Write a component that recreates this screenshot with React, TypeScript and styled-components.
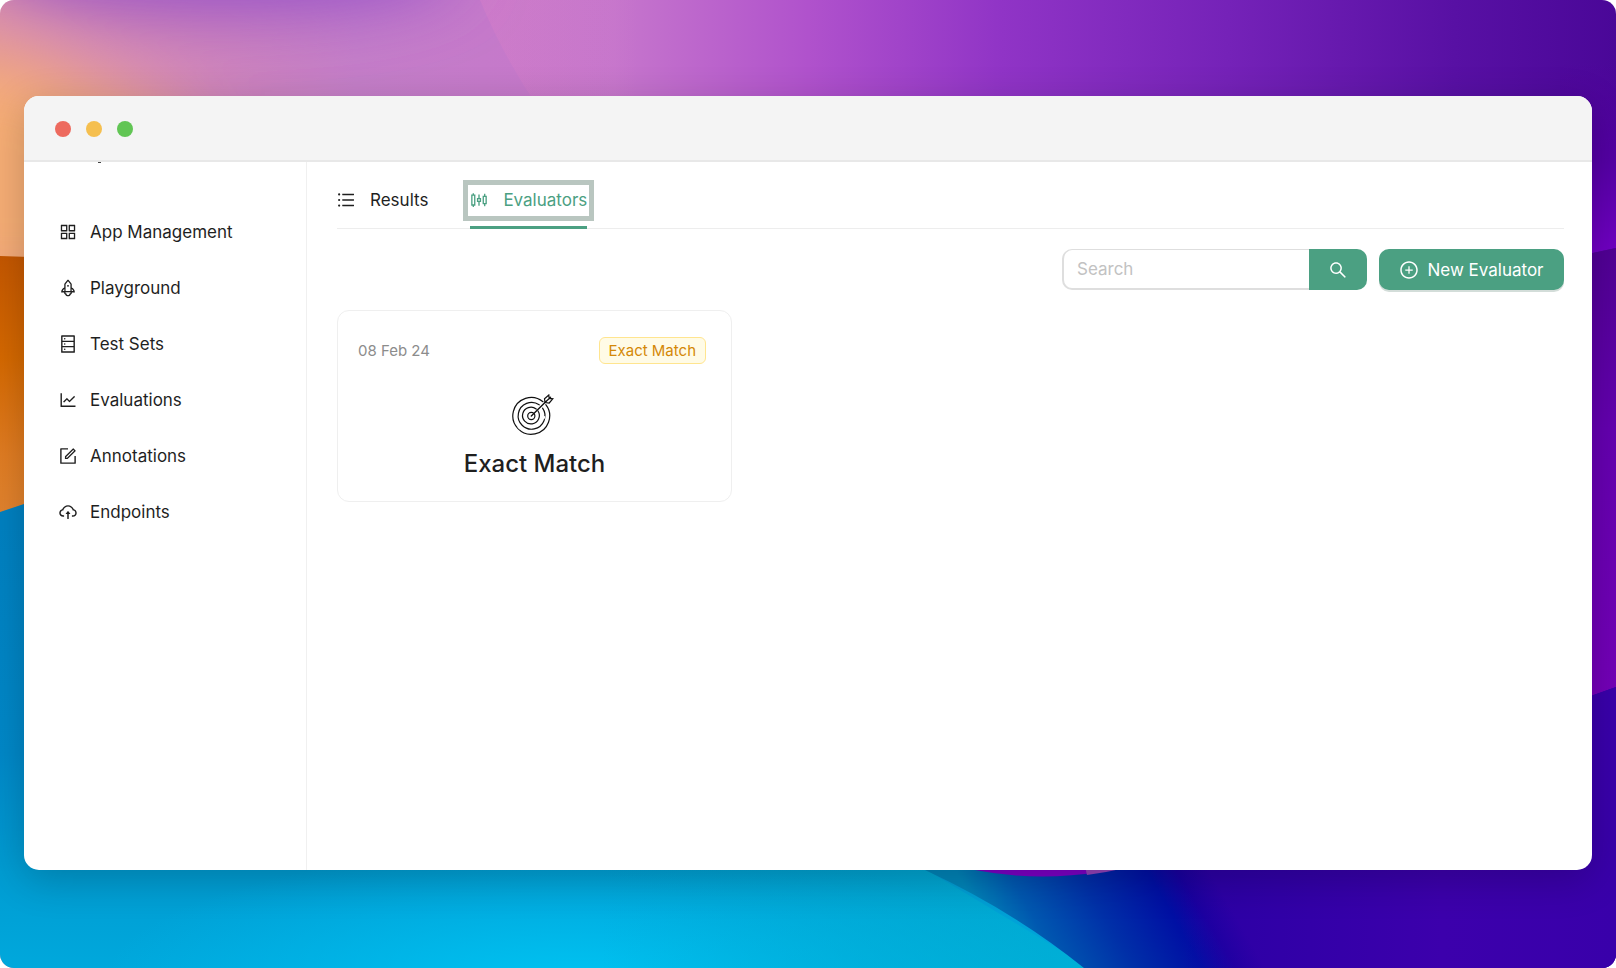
import React from "react";
import styled, { createGlobalStyle } from "styled-components";
import {
  AiOutlineAppstore,
  AiOutlineCloudUpload,
  AiOutlineDatabase,
  AiOutlineForm,
  AiOutlineLineChart,
  AiOutlinePlusCircle,
  AiOutlineRocket,
  AiOutlineSearch,
  AiOutlineSliders,
  AiOutlineUnorderedList,
} from "react-icons/ai";

const GREEN = "#4ba082";
const INK = "#1f1f1f";

const GlobalStyle = createGlobalStyle`
  *, *::before, *::after { box-sizing: border-box; }
  body {
    margin: 0;
    background: #fff;
    color: ${INK};
    font-family: Inter, "Liberation Sans", sans-serif;
    font-size: 17px;
    line-height: 24px;
  }
  button, input { font: inherit; color: inherit; }
`;

const Desktop = styled.div`
  position: relative;
  display: flex;
  min-height: 100vh;
  padding: 96px 24px 98px;
  border-radius: 14px;
  overflow: hidden;
`;

const WallpaperSvg = styled.svg`
  position: absolute;
  inset: 0;
  width: 100%;
  height: 100%;
`;

const Window = styled.div`
  position: relative;
  flex: 1;
  display: flex;
  flex-direction: column;
  min-width: 0;
  border-radius: 15px;
  background: #fff;
  overflow: hidden;
  box-shadow: 0 10px 40px rgba(0, 0, 0, 0.2);
`;

const TitleBar = styled.header`
  display: flex;
  align-items: center;
  gap: 15px;
  height: 66px;
  padding: 2px 31px 0;
  background: #f4f4f4;
  border-bottom: 2px solid #e8e8e8;
`;

const Light = styled.span<{ $color: string }>`
  width: 16px;
  height: 16px;
  border-radius: 50%;
  background: ${(p) => p.$color};
`;

const Body = styled.div`
  flex: 1;
  display: flex;
`;

const Sidebar = styled.nav`
  position: relative;
  flex: 0 0 283px;
  padding: 50px 12px 0 34px;
  border-right: 1px solid #f0f0f0;
`;

const LogoTail = styled.span`
  position: absolute;
  top: 0;
  left: 74px;
  width: 3px;
  height: 1px;
  background: #444;
`;

const Menu = styled.ul`
  display: flex;
  flex-direction: column;
  gap: 16px;
  margin: 0;
  padding: 0;
  list-style: none;
`;

const MenuLink = styled.a`
  display: flex;
  align-items: center;
  gap: 12px;
  height: 40px;
  color: inherit;
  text-decoration: none;

  svg { width: 20px; height: 20px; }
`;

const Main = styled.main`
  flex: 1;
  min-width: 0;
  padding: 12px 28px 28px 30px;
`;

const TabBar = styled.div`
  display: flex;
  gap: 42px;
  box-shadow: inset 0 -1px #ededed;
`;

const Tab = styled.button<{ $active?: boolean }>`
  height: 55px;
  padding: 0;
  border: 0;
  border-bottom: 3px solid ${(p) => (p.$active ? GREEN : "transparent")};
  background: none;
  color: ${(p) => (p.$active ? GREEN : INK)};
`;

const TabLabel = styled.span<{ $focused?: boolean }>`
  display: flex;
  align-items: center;
  gap: 15px;
  height: 27px;
  outline: ${(p) => (p.$focused ? "5px solid #b9c6c0" : "none")};
  outline-offset: 2px;

  svg { width: 20px; height: 20px; margin: 0 -1px; }
`;

const Toolbar = styled.div`
  display: flex;
  justify-content: flex-end;
  gap: 12px;
  margin: 20px 0;
`;

const SearchForm = styled.form`
  display: flex;
  width: 305px;
  height: 41px;
`;

const SearchInput = styled.input`
  flex: 1;
  min-width: 0;
  padding: 0 13px;
  border: 2px solid #dedede;
  border-width: 1px 0 2px 2px;
  border-radius: 10px 0 0 10px;
  outline: none;
  background: #fff;

  &::placeholder { color: #c2c2c2; opacity: 1; }
`;

const SearchButton = styled.button`
  display: flex;
  align-items: center;
  justify-content: center;
  width: 58px;
  padding: 0;
  border: 0;
  border-radius: 0 10px 10px 0;
  background: ${GREEN};
  color: #fff;

  svg { width: 20px; height: 20px; }
`;

const PrimaryButton = styled.button`
  display: flex;
  align-items: center;
  justify-content: center;
  gap: 8px;
  width: 185px;
  height: 41px;
  padding: 0;
  border: 0;
  border-radius: 10px;
  background: ${GREEN};
  color: #fff;
  box-shadow: 0 2px 0 #d3ddd9;

  svg { width: 20px; height: 20px; }
`;

const Cards = styled.section`
  display: grid;
  grid-template-columns: repeat(3, 1fr);
  gap: 21px;
`;

const Card = styled.article`
  display: flex;
  flex-direction: column;
  align-items: center;
  height: 192px;
  padding: 26px 20px 0;
  border: 1px solid #efefef;
  border-radius: 12px;
`;

const CardHead = styled.div`
  display: flex;
  align-items: center;
  justify-content: space-between;
  width: 100%;
  margin-bottom: 30px;
  padding-right: 5px;
`;

const DateText = styled.time`
  color: #8c8c8c;
  font-size: 15px;
`;

const Tag = styled.span`
  height: 27px;
  padding: 0 9px;
  border: 1px solid #ffe58f;
  border-radius: 6px;
  background: #fffbe6;
  color: #d48806;
  font-size: 15px;
  line-height: 26px;
`;

const TargetSvg = styled.svg`
  width: 46px;
  height: 42px;
`;

const CardTitle = styled.h2`
  margin: 12px 0 0;
  font-size: 24px;
  font-weight: 500;
  line-height: 32px;
`;

const Wallpaper = () => (
  <WallpaperSvg viewBox="0 0 1616 968" preserveAspectRatio="none" aria-hidden="true">
    <defs>
      <linearGradient id="sky" x1="0" x2="1" y1="0" y2="0">
        <stop offset="0" stopColor="#dc90a8" />
        <stop offset="0.13" stopColor="#ce84bb" />
        <stop offset="0.22" stopColor="#c47ec8" />
        <stop offset="0.38" stopColor="#c676cc" />
        <stop offset="0.5" stopColor="#b052cc" />
        <stop offset="0.62" stopColor="#9034c6" />
        <stop offset="0.76" stopColor="#7522b8" />
        <stop offset="0.9" stopColor="#5810a4" />
        <stop offset="1" stopColor="#4a0798" />
      </linearGradient>
      <linearGradient id="facet" x1="0" x2="1" y1="0" y2="0">
        <stop offset="0" stopColor="#e080c8" stopOpacity="0.3" />
        <stop offset="0.5" stopColor="#e080c8" stopOpacity="0" />
      </linearGradient>
      <linearGradient id="amber" x1="0" x2="0" y1="0" y2="1">
        <stop offset="0" stopColor="#c45700" />
        <stop offset="0.35" stopColor="#d46800" />
        <stop offset="0.7" stopColor="#e07c22" />
        <stop offset="1" stopColor="#e28634" />
      </linearGradient>
      <linearGradient id="sea" x1="0" x2="0" y1="0" y2="1">
        <stop offset="0" stopColor="#0080c0" />
        <stop offset="0.55" stopColor="#0088c8" />
        <stop offset="0.8" stopColor="#009cd2" />
        <stop offset="1" stopColor="#00a8dc" />
      </linearGradient>
      <radialGradient id="glow" gradientUnits="userSpaceOnUse" cx="0" cy="0" r="1" gradientTransform="translate(580 985) scale(480 140)">
        <stop offset="0" stopColor="#00c4f2" />
        <stop offset="1" stopColor="#00bcf0" stopOpacity="0" />
      </radialGradient>
      <linearGradient id="teal" x1="0" x2="1" y1="0" y2="0">
        <stop offset="0" stopColor="#00a8c8" stopOpacity="0" />
        <stop offset="1" stopColor="#00b4d4" />
      </linearGradient>
      <linearGradient id="deep" gradientUnits="userSpaceOnUse" x1="990" y1="930" x2="1180" y2="820">
        <stop offset="0" stopColor="#0084b8" />
        <stop offset="0.2" stopColor="#0058b0" />
        <stop offset="0.48" stopColor="#0030a8" />
        <stop offset="0.75" stopColor="#0010a4" />
        <stop offset="0.88" stopColor="#1a00a0" />
        <stop offset="1" stopColor="#2a00a4" />
      </linearGradient>
      <linearGradient id="indigo" x1="0" x2="1" y1="0" y2="0">
        <stop offset="0" stopColor="#3c00ac" stopOpacity="0" />
        <stop offset="0.6" stopColor="#3c00ac" />
        <stop offset="1" stopColor="#3900aa" />
      </linearGradient>
      <linearGradient id="violetTop" x1="0" x2="0" y1="0" y2="1">
        <stop offset="0" stopColor="#50009c" stopOpacity="0" />
        <stop offset="0.5" stopColor="#5400a4" />
        <stop offset="1" stopColor="#7300c6" />
      </linearGradient>
      <linearGradient id="violet" x1="0" x2="0" y1="0" y2="1">
        <stop offset="0" stopColor="#500094" />
        <stop offset="0.4" stopColor="#6400b0" />
        <stop offset="1" stopColor="#7400b8" />
      </linearGradient>
      <filter id="soft" x="-50%" y="-50%" width="200%" height="200%">
        <feGaussianBlur stdDeviation="34" />
      </filter>
    </defs>
    <rect width="1616" height="968" fill="url(#sky)" />
    <g filter="url(#soft)">
      <ellipse cx="220" cy="-36" rx="240" ry="46" fill="#9450c8" />
      <path d="M-80 50 L20 60 L190 130 L190 300 L-80 300 Z" fill="#f6ad74" />
    </g>
    <path d="M480 0 H800 V110 H540 Q505 60 480 0Z" fill="url(#facet)" />
    <path d="M0 256 L60 258 L60 540 L0 540Z" fill="url(#amber)" />
    <path d="M1560 60 H1616 V248 L1560 260Z" fill="url(#violetTop)" />
    <path d="M1560 260 L1616 248 V700 H1560Z" fill="url(#violet)" />
    <path d="M0 512 L60 492 L900 840 L1200 968 H0Z" fill="url(#sea)" />
    <path d="M0 830 H1200 V968 H0Z" fill="url(#glow)" />
    <path d="M600 830 H860 L1090 968 H600Z" fill="url(#teal)" opacity="0.65" />
    <path d="M850 836 L925 870 Q1015 912 1084 968 H1616 V687 L1560 707Z" fill="url(#deep)" />
    <path d="M1180 840 L1560 707 L1616 687 V968 H1180Z" fill="url(#indigo)" />
    <path d="M930 858 Q1040 895 1160 858Z" fill="#7b00c5" />
    <path d="M1083 858 L1087 875 Q1120 871 1160 858Z" fill="#9343b9" />
  </WallpaperSvg>
);

const TargetIcon = () => (
  <TargetSvg viewBox="0 0 46 42" fill="none" stroke="#111" strokeWidth="1.2" strokeLinecap="round" aria-hidden="true">
    <path d="M33.8 10.6 A18.4 18.4 0 1 1 31 7.7" />
    <path d="M30.6 14.2 A13.4 13.4 0 1 1 27.2 10.8" />
    <path d="M26 17 A8.4 8.4 0 1 1 24.2 15" />
    <circle cx="19.3" cy="22" r="3.6" />
    <path d="M19.3 22 L34 7.5" strokeWidth="1.4" />
    <path d="M33 8.5 L32.5 4.8 L36.8 1 L37.2 4.4 L40.8 4.8 L37.2 9 Z M34 7.5 L38.6 3.2" />
    <path d="M6.5 33 L8 34.5 M31.5 24.5 L32.5 23" stroke="#fff" strokeWidth="2" />
  </TargetSvg>
);

const menu = [
  { label: "App Management", Icon: AiOutlineAppstore },
  { label: "Playground", Icon: AiOutlineRocket },
  { label: "Test Sets", Icon: AiOutlineDatabase },
  { label: "Evaluations", Icon: AiOutlineLineChart },
  { label: "Annotations", Icon: AiOutlineForm },
  { label: "Endpoints", Icon: AiOutlineCloudUpload },
];

export default function App() {
  return (
    <>
      <GlobalStyle />
      <Desktop>
        <Wallpaper />
        <Window>
          <TitleBar>
            <Light $color="#ed6a5e" />
            <Light $color="#f5bf4f" />
            <Light $color="#61c554" />
          </TitleBar>
          <Body>
            <Sidebar aria-label="Main">
              <LogoTail />
              <Menu>
                {menu.map(({ label, Icon }) => (
                  <li key={label}>
                    <MenuLink href="#">
                      <Icon aria-hidden="true" />
                      {label}
                    </MenuLink>
                  </li>
                ))}
              </Menu>
            </Sidebar>
            <Main>
              <TabBar role="tablist">
                <Tab type="button" role="tab" aria-selected={false}>
                  <TabLabel>
                    <AiOutlineUnorderedList aria-hidden="true" />
                    Results
                  </TabLabel>
                </Tab>
                <Tab type="button" role="tab" aria-selected $active>
                  <TabLabel $focused>
                    <AiOutlineSliders aria-hidden="true" />
                    Evaluators
                  </TabLabel>
                </Tab>
              </TabBar>
              <Toolbar>
                <SearchForm role="search" onSubmit={(e) => e.preventDefault()}>
                  <SearchInput type="text" placeholder="Search" aria-label="Search" />
                  <SearchButton type="submit" aria-label="Submit search">
                    <AiOutlineSearch aria-hidden="true" />
                  </SearchButton>
                </SearchForm>
                <PrimaryButton type="button">
                  <AiOutlinePlusCircle aria-hidden="true" />
                  New Evaluator
                </PrimaryButton>
              </Toolbar>
              <Cards>
                <Card>
                  <CardHead>
                    <DateText dateTime="2024-02-08">08 Feb 24</DateText>
                    <Tag>Exact Match</Tag>
                  </CardHead>
                  <TargetIcon />
                  <CardTitle>Exact Match</CardTitle>
                </Card>
              </Cards>
            </Main>
          </Body>
        </Window>
      </Desktop>
    </>
  );
}
